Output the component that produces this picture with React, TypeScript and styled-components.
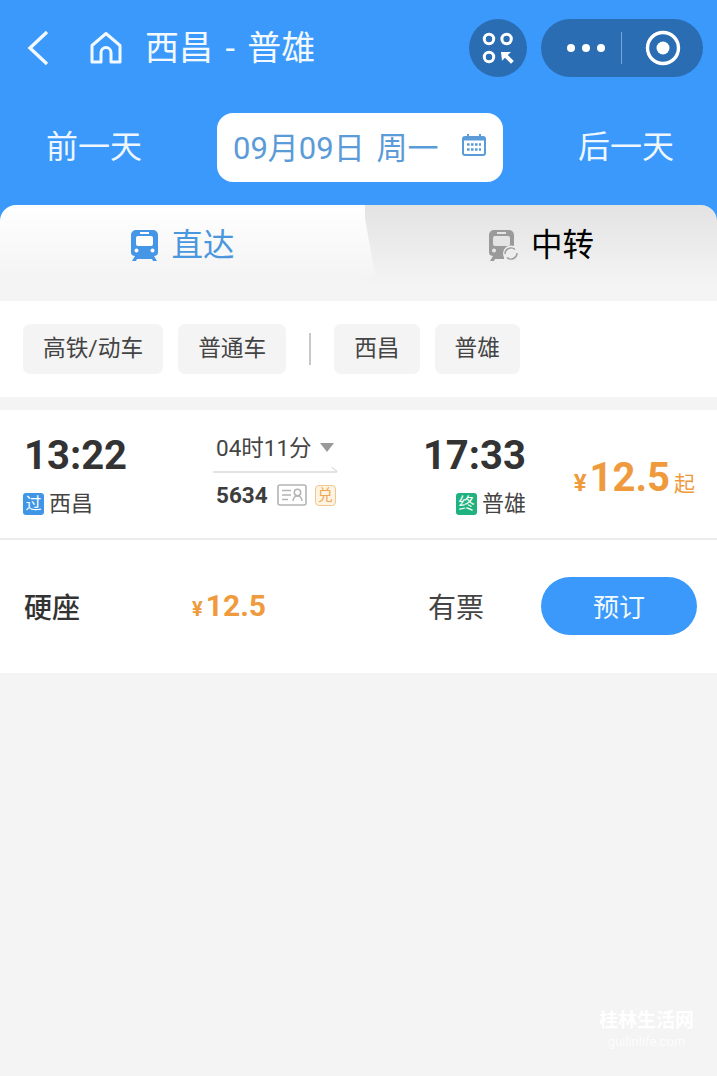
import React from 'react';
import styled, { createGlobalStyle } from 'styled-components';

const GlobalStyle = createGlobalStyle`
  html, body {
    margin: 0;
    background: #f4f4f4;
  }
  body {
    font-family: 'Roboto', 'Noto Sans CJK SC', sans-serif;
    color: #333;
  }
  * {
    box-sizing: border-box;
  }
`;

const Page = styled.div`
  position: relative;
  width: 717px;
  height: 1076px;
  overflow: hidden;
  background: #f4f4f4;
`;

const Header = styled.header`
  height: 205px;
  padding-top: 19px;
  background: #3b99fc;
`;

const NavBar = styled.div`
  display: flex;
  align-items: center;
  height: 58px;
  padding: 0 14px 0 26px;
  color: #f2f9ff;
`;

const NavIcon = styled.svg`
  display: block;
  flex: none;
`;

const Title = styled.h1`
  flex: 1;
  margin: 0 0 0 22px;
  font-size: 34px;
  line-height: 58px;
  font-weight: 400;
  word-spacing: 4px;
  white-space: nowrap;
`;

const RoundButton = styled.div`
  display: flex;
  align-items: center;
  justify-content: center;
  width: 58px;
  height: 58px;
  margin-right: 14px;
  border-radius: 50%;
  background: #2b6db3;
`;

const Capsule = styled.div`
  display: flex;
  align-items: center;
  width: 162px;
  height: 58px;
  border-radius: 29px;
  background: #2b6db3;
`;

const CapsulePart = styled.div`
  display: flex;
  align-items: center;
  justify-content: center;
  flex: none;
  width: ${p => (p.$wide ? '80px' : '81px')};
  height: 100%;
  padding-left: ${p => (p.$wide ? '10px' : '0')};
`;

const CapsuleLine = styled.div`
  width: 1px;
  height: 32px;
  background: #7ba6d4;
`;

const DateRow = styled.div`
  display: grid;
  grid-template-columns: 217px 286px 1fr;
  align-items: center;
  height: 69px;
  margin-top: 36px;
`;

const DayLink = styled.div`
  font-size: 32px;
  line-height: 69px;
  text-align: center;
  color: #eef7ff;
  padding-left: ${p => (p.$next ? '32px' : '0')};
  padding-right: ${p => (p.$next ? '0' : '29px')};
`;

const DatePill = styled.div`
  display: flex;
  align-items: center;
  justify-content: space-between;
  height: 69px;
  padding: 0 17px 5px 16px;
  border-radius: 16px;
  background: #fff;
  color: #5b9bd8;
  font-size: 31px;
  word-spacing: 4px;
  white-space: pre;
`;

const Tabs = styled.div`
  display: flex;
  height: 96px;
  background: #3b99fc;
`;

const Tab = styled.div`
  position: relative;
  z-index: ${p => (p.$active ? 1 : 0)};
  display: flex;
  align-items: center;
  justify-content: center;
  gap: 12px;
  padding-bottom: 15px;
  border-radius: ${p => (p.$active ? '16px 0 0 0' : '0 16px 0 0')};
  width: ${p => (p.$active ? '365px' : '352px')};
  background: ${p =>
    p.$active
      ? 'linear-gradient(#ffffff 0, #f4f4f4 72px)'
      : 'linear-gradient(#e3e3e3 0, #f4f4f4 80px)'};
  color: ${p => (p.$active ? '#4b97de' : '#000')};
  font-size: 31.5px;
`;

const TabEdge = styled.div`
  position: absolute;
  top: 0;
  right: -4px;
  width: 24px;
  height: 72px;
  border-top-right-radius: 16px;
  background: linear-gradient(#ffffff, #f4f4f4);
  transform: skewX(10deg);
`;

const TabLabel = styled.span`
  position: relative;
  line-height: 1;
`;

const Filters = styled.div`
  display: flex;
  align-items: center;
  gap: 15px;
  height: 96px;
  padding-left: 23px;
  background: #fff;
`;

const Chip = styled.div`
  height: 50px;
  padding: 0 20px;
  border-radius: 7px;
  background: #f4f4f4;
  color: #444;
  font-size: 22.7px;
  line-height: 49px;
  white-space: nowrap;
`;

const FilterLine = styled.div`
  width: 2px;
  height: 32px;
  margin: 0 8px;
  background: #c8c8c8;
`;

const Card = styled.section`
  margin-top: 13px;
  background: #fff;
`;

const TrainRow = styled.div`
  display: grid;
  grid-template-columns: 189px 124px 189px 1fr;
  height: 130px;
  padding: 0 22px 0 24px;
  border-bottom: 2px solid #ececec;
`;

const StopCol = styled.div`
  display: flex;
  flex-direction: column;
  align-items: ${p => (p.$end ? 'flex-end' : 'flex-start')};
  padding-top: 22px;
`;

const Clock = styled.div`
  font-size: 40px;
  line-height: 48px;
  font-weight: 700;
  color: #333;
`;

const Station = styled.div`
  display: flex;
  align-items: center;
  gap: 5px;
  margin-top: 10px;
  margin-left: -1px;
  font-size: 22px;
  line-height: 28px;
  color: #444;
`;

const StopBadge = styled.span`
  display: flex;
  align-items: center;
  justify-content: center;
  width: 21px;
  height: 22px;
  border-radius: 3px;
  background: ${p => p.$color};
  color: #fff;
  font-size: 16px;
  line-height: 1;
`;

const MiddleCol = styled.div`
  padding-top: 21px;
`;

const Duration = styled.div`
  display: flex;
  align-items: center;
  height: 30px;
  padding-left: 3px;
  font-size: 22.5px;
  color: #444;
  white-space: nowrap;
`;

const Caret = styled.span`
  width: 0;
  height: 0;
  margin: 3px 0 0 8px;
  border-style: solid;
  border-width: 9px 7px 0;
  border-color: #999 transparent transparent;
`;

const RouteLine = styled.div`
  position: relative;
  height: 2px;
  margin-top: 10px;
  background: #e3e3e3;
  &::after {
    content: '';
    position: absolute;
    right: 0;
    bottom: 1px;
    width: 7px;
    height: 1px;
    background: #d5d5d5;
    transform: rotate(38deg);
    transform-origin: right bottom;
  }
`;

const TrainInfo = styled.div`
  display: flex;
  align-items: center;
  gap: 9px;
  margin-top: 8px;
  padding-left: 3px;
`;

const TrainNo = styled.span`
  font-size: 22.5px;
  line-height: 28px;
  font-weight: 700;
  color: #3d3d3d;
`;

const ExchangeBadge = styled.span`
  display: flex;
  align-items: center;
  justify-content: center;
  width: 21px;
  height: 21px;
  margin-left: -1px;
  border: 1.5px solid #f0c58f;
  border-radius: 4px;
  background: #fff4e4;
  color: #f0a653;
  font-size: 15px;
  line-height: 1;
`;

const PriceCol = styled.div`
  display: flex;
  align-items: baseline;
  justify-content: flex-end;
  padding-top: 44px;
  color: #f09a3e;
  font-weight: 700;
`;

const Yen = styled.span`
  font-size: ${p => p.$size};
  margin-right: 3px;
`;

const PriceValue = styled.span`
  font-size: ${p => p.$size};
  line-height: 48px;
`;

const PriceUnit = styled.span`
  margin-left: 4px;
  font-size: 21px;
  font-weight: 400;
`;

const SeatRow = styled.div`
  display: grid;
  grid-template-columns: 168px 236px 113px 1fr;
  align-items: center;
  height: 133px;
  padding: 0 20px 2px 24px;
`;

const SeatName = styled.div`
  font-size: 28px;
  font-weight: 500;
  color: #333;
`;

const SeatPrice = styled.div`
  display: flex;
  align-items: baseline;
  color: #f09a3e;
  font-weight: 700;
`;

const SeatStatus = styled.div`
  font-size: 28px;
  color: #444;
`;

const BookButton = styled.button`
  width: 156px;
  height: 58px;
  padding: 0;
  border: 0;
  border-radius: 29px;
  background: #3b99fc;
  color: #f2f9ff;
  font-family: inherit;
  font-size: 26px;
`;

const Watermark = styled.div`
  position: absolute;
  left: 599px;
  top: 1007px;
  color: #fff;
  text-align: center;
`;

const WatermarkName = styled.div`
  font-size: 19px;
  line-height: 28px;
  font-weight: 700;
`;

const WatermarkUrl = styled.div`
  font-size: 13px;
  line-height: 14px;
  opacity: 0.8;
`;

const BackIcon = () => (
  <NavIcon width="24" height="36" viewBox="0 0 24 36">
    <path d="M21 2 4 18l17 16" fill="none" stroke="currentColor" strokeWidth="3.4" />
  </NavIcon>
);

const HomeIcon = () => (
  <NavIcon width="34" height="34" viewBox="0 0 34 34" style={{ marginLeft: 39 }}>
    <path
      d="M3 31V14.5L17 2.5l14 12V31H22V21.5a5 5 0 0 0-10 0V31Z"
      fill="none"
      stroke="currentColor"
      strokeWidth="3"
      strokeLinejoin="round"
    />
  </NavIcon>
);

const ScanIcon = () => (
  <NavIcon width="32" height="32" viewBox="0 0 32 32">
    <g fill="none" stroke="#fff" strokeWidth="3">
      <circle cx="7" cy="7" r="4.7" />
      <circle cx="24.6" cy="7" r="4.7" />
      <circle cx="7" cy="25" r="4.7" />
    </g>
    <path d="M19 20h10l-3.2 3 6 6-2.8 2.8-6-6-3 3Z" fill="#fff" />
  </NavIcon>
);

const DotsIcon = () => (
  <NavIcon width="40" height="10" viewBox="0 0 40 10">
    <circle cx="5" cy="5" r="4" fill="#fff" />
    <circle cx="20" cy="5" r="4" fill="#fff" />
    <circle cx="35" cy="5" r="4" fill="#fff" />
  </NavIcon>
);

const TargetIcon = () => (
  <NavIcon width="36" height="36" viewBox="0 0 36 36">
    <circle cx="18" cy="18" r="15.5" fill="none" stroke="#fff" strokeWidth="3.4" />
    <circle cx="18" cy="18" r="6.5" fill="#fff" />
  </NavIcon>
);

const CalendarIcon = () => (
  <NavIcon width="24" height="24" viewBox="0 0 24 24">
    <rect x="1" y="4" width="22" height="18" rx="2" fill="none" stroke="#5b9bd8" strokeWidth="2" />
    <path d="M1 7.5h22V4H1Z" fill="#5b9bd8" />
    <path d="M6 1v4M18 1v4" stroke="#5b9bd8" strokeWidth="2" />
    <path d="M5 11.5h14M5 16.5h14" stroke="#5b9bd8" strokeWidth="2.4" strokeDasharray="2.6 1.4" />
  </NavIcon>
);

const TrainIcon = ({ color }: { color: string }) => (
  <NavIcon width="29" height="33" viewBox="0 0 29 33">
    <path
      d="M6 1h17a5 5 0 0 1 5 5v17a4 4 0 0 1-4 4H5a4 4 0 0 1-4-4V6a5 5 0 0 1 5-5Z"
      fill={color}
    />
    <rect x="6" y="7" width="17" height="10" rx="2" fill="#fff" />
    <rect x="10" y="3" width="9" height="2" fill="#fff" />
    <circle cx="6.5" cy="21.5" r="2" fill="#fff" />
    <circle cx="22.5" cy="21.5" r="2" fill="#fff" />
    <path d="M5 27 2 32h4l1-2h15l1 2h4l-3-5Z" fill={color} />
  </NavIcon>
);

const TransferIcon = () => (
  <NavIcon width="31" height="33" viewBox="0 0 31 33">
    <path
      d="M6 1h15a5 5 0 0 1 5 5v17a4 4 0 0 1-4 4H5a4 4 0 0 1-4-4V6a5 5 0 0 1 5-5Z"
      fill="#9a9a9a"
    />
    <rect x="5" y="7" width="17" height="10" rx="2" fill="#e4e4e4" />
    <rect x="9" y="3" width="9" height="2" fill="#e4e4e4" />
    <circle cx="6" cy="21.5" r="2" fill="#e8e8e8" />
    <path d="M5 27 2 32h4l1-2h9v-3Z" fill="#9a9a9a" />
    <circle cx="23" cy="24.5" r="8" fill="#ededed" />
    <path d="M17 25a6 6 0 0 1 10-4.5M29 24a6 6 0 0 1-10 4.5" fill="none" stroke="#9a9a9a" strokeWidth="1.4" />
  </NavIcon>
);

const IdCardIcon = () => (
  <NavIcon width="30" height="22" viewBox="0 0 30 22">
    <rect x="1" y="1" width="28" height="20" rx="2" fill="none" stroke="#b4b4b4" strokeWidth="1.6" />
    <path d="M5 6.5h9M5 11h9M5 15.5h6" stroke="#b4b4b4" strokeWidth="1.5" />
    <circle cx="20.5" cy="8.5" r="3.2" fill="none" stroke="#b4b4b4" strokeWidth="1.5" />
    <path d="M16 17c.3-3.5 2-5 4.5-5s4.2 1.5 4.5 5" fill="none" stroke="#b4b4b4" strokeWidth="1.5" />
  </NavIcon>
);

const App: React.FC = () => {
  return (
    <>
      <GlobalStyle />
      <Page>
        <Header>
          <NavBar>
            <BackIcon />
            <HomeIcon />
            <Title>西昌 - 普雄</Title>
            <RoundButton>
              <ScanIcon />
            </RoundButton>
            <Capsule>
              <CapsulePart $wide>
                <DotsIcon />
              </CapsulePart>
              <CapsuleLine />
              <CapsulePart>
                <TargetIcon />
              </CapsulePart>
            </Capsule>
          </NavBar>
          <DateRow>
            <DayLink>前一天</DayLink>
            <DatePill>
              <span>09月09日 周一</span>
              <CalendarIcon />
            </DatePill>
            <DayLink $next>后一天</DayLink>
          </DateRow>
        </Header>

        <Tabs>
          <Tab $active>
            <TabEdge />
            <TrainIcon color="#4596e6" />
            <TabLabel>直达</TabLabel>
          </Tab>
          <Tab>
            <TransferIcon />
            <TabLabel>中转</TabLabel>
          </Tab>
        </Tabs>

        <Filters>
          <Chip>高铁/动车</Chip>
          <Chip>普通车</Chip>
          <FilterLine />
          <Chip>西昌</Chip>
          <Chip>普雄</Chip>
        </Filters>

        <Card>
          <TrainRow>
            <StopCol>
              <Clock>13:22</Clock>
              <Station>
                <StopBadge $color="#3f96e6">过</StopBadge>
                西昌
              </Station>
            </StopCol>
            <MiddleCol>
              <Duration>
                04时11分
                <Caret />
              </Duration>
              <RouteLine />
              <TrainInfo>
                <TrainNo>5634</TrainNo>
                <IdCardIcon />
                <ExchangeBadge>兑</ExchangeBadge>
              </TrainInfo>
            </MiddleCol>
            <StopCol $end>
              <Clock>17:33</Clock>
              <Station>
                <StopBadge $color="#1fb27e">终</StopBadge>
                普雄
              </Station>
            </StopCol>
            <PriceCol>
              <Yen $size="24px">¥</Yen>
              <PriceValue $size="40px">12.5</PriceValue>
              <PriceUnit>起</PriceUnit>
            </PriceCol>
          </TrainRow>
          <SeatRow>
            <SeatName>硬座</SeatName>
            <SeatPrice>
              <Yen $size="20px">¥</Yen>
              <PriceValue $size="30px">12.5</PriceValue>
            </SeatPrice>
            <SeatStatus>有票</SeatStatus>
            <BookButton>预订</BookButton>
          </SeatRow>
        </Card>

        <Watermark>
          <WatermarkName>桂林生活网</WatermarkName>
          <WatermarkUrl>guilinlife.com</WatermarkUrl>
        </Watermark>
      </Page>
    </>
  );
};

export default App;
